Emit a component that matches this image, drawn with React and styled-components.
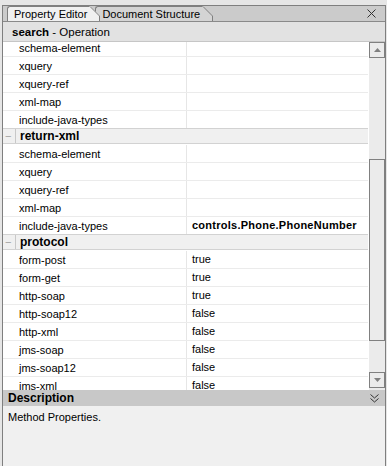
import React from 'react';
import styled, { createGlobalStyle } from 'styled-components';

const GlobalStyle = createGlobalStyle`
  html, body { margin: 0; padding: 0; background: #e6e6e6; }
  body {
    font-family: Tahoma, 'Liberation Sans', Arial, sans-serif;
    font-size: 11px;
    color: #000;
  }
`;

const sections = [
  {
    title: null,
    rows: [
      ['schema-element', ''],
      ['xquery', ''],
      ['xquery-ref', ''],
      ['xml-map', ''],
      ['include-java-types', ''],
    ],
  },
  {
    title: 'return-xml',
    rows: [
      ['schema-element', ''],
      ['xquery', ''],
      ['xquery-ref', ''],
      ['xml-map', ''],
      ['include-java-types', 'controls.Phone.PhoneNumber', true],
    ],
  },
  {
    title: 'protocol',
    rows: [
      ['form-post', 'true'],
      ['form-get', 'true'],
      ['http-soap', 'true'],
      ['http-soap12', 'false'],
      ['http-xml', 'false'],
      ['jms-soap', 'false'],
      ['jms-soap12', 'false'],
      ['jms-xml', 'false'],
    ],
  },
];

const TabEar = ({ fill }) => (
  <svg width="11" height="15" viewBox="0 0 11 15">
    <path d="M0 0 L1 0 L11 10 L11 15 L0 15 Z" fill={fill} />
    <path d="M0.5 0.5 L1 0.5 L10.5 10 L10.5 15" fill="none" stroke="#7f7f7f" />
  </svg>
);

const App = () => (
  <>
    <GlobalStyle />
    <Frame>
      <Panel>
        <TabStrip>
          <Tab $active>
            <TabLabel $active>Property Editor</TabLabel>
            <TabEar fill="#f0f0f0" />
          </Tab>
          <Tab>
            <TabLabel>Document Structure</TabLabel>
            <TabEar fill="#d4d4d4" />
          </Tab>
          <Close>
            <svg width="9" height="9" viewBox="0 0 9 9">
              <path d="M0.5 0.5 L8.5 8.5 M8.5 0.5 L0.5 8.5" stroke="#333" strokeWidth="1" />
            </svg>
          </Close>
        </TabStrip>
        <Header>
          <b>search</b>&nbsp;- Operation
        </Header>
        <Body>
          <List>
            <ListInner>
              {sections.map((s, i) => (
                <React.Fragment key={i}>
                  {s.title && (
                    <Section>
                      <Toggle>−</Toggle>
                      <SectionTitle>{s.title}</SectionTitle>
                    </Section>
                  )}
                  {s.rows.map(([name, value, bold]) => (
                    <Row key={s.title + name}>
                      <Name>{name}</Name>
                      <Value $bold={bold}>{value}</Value>
                    </Row>
                  ))}
                </React.Fragment>
              ))}
            </ListInner>
          </List>
          <Scrollbar>
            <ScrollButton>
              <svg width="7" height="4" viewBox="0 0 7 4">
                <path d="M0 4 L3.5 0 L7 4 Z" fill="#808080" />
              </svg>
            </ScrollButton>
            <Track $h={101} />
            <Thumb />
            <Track $h={31} />
            <ScrollButton>
              <svg width="7" height="4" viewBox="0 0 7 4">
                <path d="M0 0 L7 0 L3.5 4 Z" fill="#808080" />
              </svg>
            </ScrollButton>
          </Scrollbar>
        </Body>
        <DescBar>
          <span>Description</span>
          <svg width="9" height="9" viewBox="0 0 9 9">
            <path d="M0.5 0.5 L4.5 4 L8.5 0.5 M0.5 4.5 L4.5 8 L8.5 4.5" fill="none" stroke="#333" />
          </svg>
        </DescBar>
        <DescBody>Method Properties.</DescBody>
      </Panel>
    </Frame>
  </>
);

const Frame = styled.div`
  width: 387px;
  height: 466px;
  box-sizing: border-box;
  padding: 5px 1px 0 2px;
  display: flex;
  overflow: hidden;
`;

const Panel = styled.div`
  flex: 1;
  display: flex;
  flex-direction: column;
  border: 1px solid #7f7f7f;
  border-bottom: none;
  background: #f0f0f0;
`;

const TabStrip = styled.div`
  height: 15px;
  display: flex;
  align-items: flex-end;
  padding-left: 4px;
  background: #cbcbcb;
  border-bottom: 1px solid #8a8a8a;
`;

const Tab = styled.div`
  display: flex;
  height: 15px;
  margin-right: ${(p) => (p.$active ? '-5px' : '0')};
  position: relative;
  z-index: ${(p) => (p.$active ? 2 : 1)};
`;

const TabLabel = styled.div`
  height: 15px;
  box-sizing: border-box;
  padding: 1px ${(p) => (p.$active ? '2px' : '2px')} 0 ${(p) => (p.$active ? '6px' : '6px')};
  background: ${(p) => (p.$active ? '#f0f0f0' : '#d4d4d4')};
  border-left: 1px solid #7f7f7f;
  border-top: 1px solid #7f7f7f;
  border-top-left-radius: 3px;
  font-size: 11px;
  line-height: 13px;
  white-space: nowrap;
`;

const Close = styled.div`
  margin-left: auto;
  width: 20px;
  align-self: center;
  display: flex;
  justify-content: center;
  margin-right: 4px;
`;

const Header = styled.div`
  height: 20px;
  box-sizing: border-box;
  display: flex;
  align-items: center;
  padding-left: 9px;
  background: #e2e2e2;
  border-bottom: 1px solid #c6c6c6;
  font-size: 11.5px;
`;

const Body = styled.div`
  height: 348px;
  display: flex;
`;

const List = styled.div`
  flex: 1;
  overflow: hidden;
  background: #fff;
  padding-right: 1px;
`;

const ListInner = styled.div`
  margin-top: -3px;
`;

const Row = styled.div`
  display: grid;
  grid-template-columns: 183px 1fr;
  height: 18px;
  box-sizing: border-box;
  border-bottom: 1px solid #ebebeb;
  align-items: center;
`;

const Name = styled.div`
  padding-left: 16px;
  white-space: nowrap;
`;

const Value = styled.div`
  height: 17px;
  line-height: 17px;
  border-left: 1px solid #e6e6e6;
  padding-left: 5px;
  white-space: nowrap;
  font-weight: ${(p) => (p.$bold ? 'bold' : 'normal')};
  letter-spacing: ${(p) => (p.$bold ? '0.25px' : '0')};
`;

const Section = styled.div`
  height: 16px;
  box-sizing: border-box;
  display: flex;
  align-items: center;
  background: #f0f0f0;
  border-top: 1px solid #d2d2d2;
  border-bottom: 1px solid #d2d2d2;
  margin-top: -1px;
  margin-bottom: 1px;
`;

const Toggle = styled.div`
  width: 10px;
  padding-left: 2px;
  color: #a0a0a0;
  border-right: 1px solid #c8c8c8;
  height: 14px;
  line-height: 14px;
`;

const SectionTitle = styled.div`
  padding-left: 4px;
  font-weight: bold;
  font-size: 12px;
`;

const Scrollbar = styled.div`
  width: 16px;
  display: flex;
  flex-direction: column;
  background: #ebebeb;
`;

const ScrollButton = styled.div`
  height: 16px;
  box-sizing: border-box;
  border: 1px solid #808080;
  display: flex;
  align-items: center;
  justify-content: center;
  background: #ebebeb;
`;

const Track = styled.div`
  height: ${(p) => p.$h}px;
`;

const Thumb = styled.div`
  height: 182px;
  box-sizing: border-box;
  border: 1px solid #808080;
  background: #ebebeb;
`;

const DescBar = styled.div`
  height: 16px;
  display: flex;
  align-items: center;
  justify-content: space-between;
  padding: 0 6px 0 5px;
  background: #c8c8c8;
  font-weight: bold;
  font-size: 12px;
`;

const DescBody = styled.div`
  flex: 1;
  padding: 5px 0 0 5px;
  background: #f0f0f0;
`;

export default App;
